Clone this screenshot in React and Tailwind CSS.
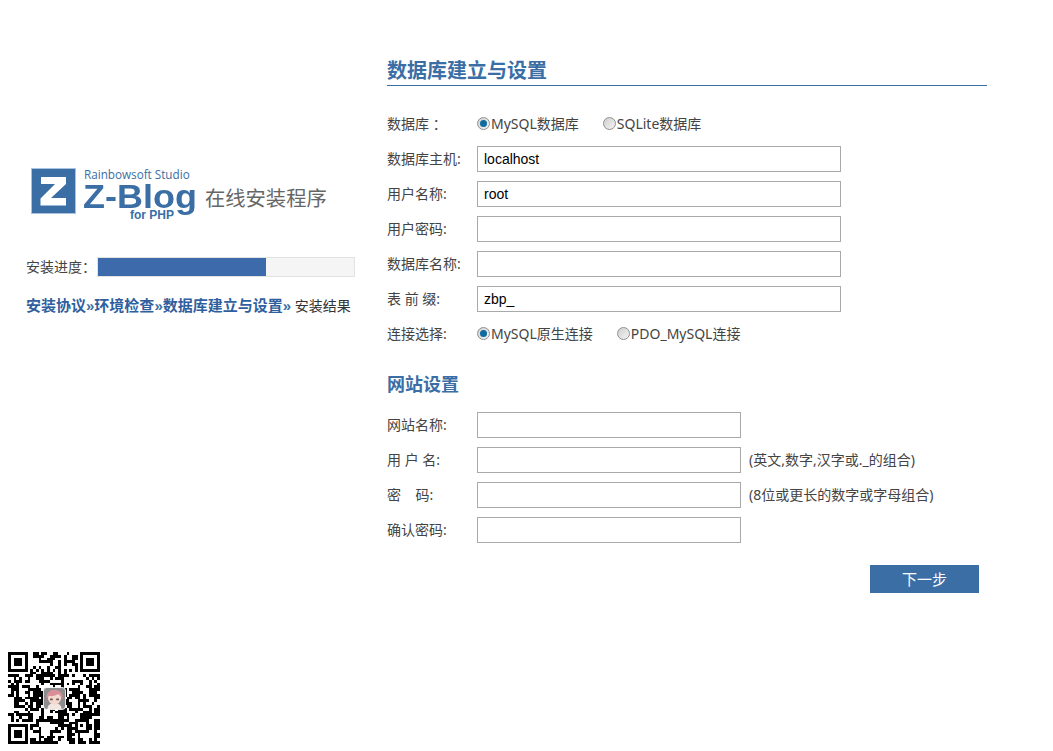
import React from 'react';

const BLUE = 'text-[#3a6ea5]';

// QR modules, seeded so it stays the same between runs
const QR_SIZE = 33;
const qrCells = () => {
  const cells = [];
  let seed = 7331;
  const next = () => {
    seed = (seed * 1103515245 + 12345) & 0x7fffffff;
    return ((seed >> 16) & 255) / 255;
  };
  const inFinder = (x, y) =>
    (x < 8 && y < 8) || (x >= QR_SIZE - 8 && y < 8) || (x < 8 && y >= QR_SIZE - 8);
  const inAlign = (x, y) => x >= 24 && x <= 28 && y >= 24 && y <= 28;
  const on = {};
  for (let y = 0; y < QR_SIZE; y++) {
    for (let x = 0; x < QR_SIZE; x++) {
      if (inFinder(x, y) || inAlign(x, y)) continue;
      // runs of the same colour, the code in the picture is blocky
      const left = on[`${x - 1}-${y}`];
      const up = on[`${x}-${y - 1}`];
      let p = 0.36;
      if (left) p += 0.16;
      if (up) p += 0.16;
      let v = next() < p;
      if (y === 6) v = x % 2 === 0;
      if (x === 6) v = y % 2 === 0;
      on[`${x}-${y}`] = v;
      if (v) cells.push([x, y]);
    }
  }
  return cells;
};

const Finder = ({ x, y }) => (
  <g>
    <path d={`M${x} ${y}h7v7h-7z M${x + 1} ${y + 1}v5h5v-5z`} fillRule="evenodd" fill="#000" />
    <rect x={x + 2} y={y + 2} width="3" height="3" fill="#000" />
  </g>
);

const QrCode = () => (
  <div className="relative w-[92px] h-[92px]">
    <svg className="blur-[0.35px]" width="92" height="92" viewBox="0 0 33 33" shapeRendering="crispEdges">
      {qrCells().map(([x, y]) => (
        <rect key={`${x}-${y}`} x={x} y={y} width="1" height="1" fill="#000" />
      ))}
      <Finder x={0} y={0} />
      <Finder x={26} y={0} />
      <Finder x={0} y={26} />
      <path d="M24 24h5v5h-5z M25 25v3h3v-3z" fillRule="evenodd" fill="#000" />
      <rect x="26" y="26" width="1" height="1" fill="#000" />
    </svg>
    {/* avatar in the middle of the code */}
    <svg className="absolute left-[35px] top-[35px]" width="23" height="23" viewBox="0 0 26 26">
      <rect x="0.5" y="0.5" width="25" height="25" rx="4" fill="#8d8d8d" stroke="#fff" />
      <path d="M5 25c0-5 4-7 8-7s8 2 8 7z" fill="#f1e6e2" />
      <ellipse cx="13" cy="12" rx="7.5" ry="8" fill="#f4d9cf" />
      <path d="M4 14C3 6 8 3 13 3s10 3 9 11c-2-3-3-5-5-6-3 2-7 3-10 2-1 1-2 2-3 4z" fill="#d98f98" />
      <path d="M8 13h3v2H8zM15 13h3v2h-3z" fill="#6a5550" />
    </svg>
  </div>
);

const Logo = () => (
  <div className="flex items-start h-[55px] ml-[5px]">
    <svg width="45" height="46" viewBox="0 0 45 46" className="mt-[1px]">
      <rect x="0.5" y="0.5" width="44" height="45" fill="#3a6ea5" stroke="#a9c4e0" />
      <path d="M10 9h25v7L20 30h15v7.5H9.5v-7L24 16H10z" fill="#fff" />
    </svg>
    <div className="relative w-[120px] h-[55px] ml-[7px] font-['Liberation_Sans',sans-serif] text-[#3a6ea5]">
      <div className="absolute left-[1px] top-0 text-[11.7px] leading-[14px] whitespace-nowrap font-['Open_Sans',sans-serif]">
        Rainbowsoft Studio
      </div>
      <div className="absolute left-0 top-[18px] text-[33px] leading-[24px] font-bold whitespace-nowrap origin-left scale-x-[1.09]">
        Z-Blog
      </div>
      <div className="absolute left-[47px] top-[42px] text-[12px] leading-[12px] font-bold whitespace-nowrap">
        for PHP
      </div>
    </div>
    <div className="ml-[2px] mt-[18px] text-[20.3px] leading-[27px] text-[#666] whitespace-nowrap">
      在线安装程序
    </div>
  </div>
);

const Radio = ({ checked, label }) => (
  <label className="flex items-center text-[14px] text-[#444] pb-[2px]">
    <span className="w-[13px] h-[13px] rounded-full border border-[#8f8f8f] flex items-center justify-center bg-gradient-to-br from-[#d0d0d0] to-[#f4f4f4]">
      {checked && <span className="w-[7px] h-[7px] rounded-full bg-[#0f6a9f]" />}
    </span>
    <span className="ml-px">{label}</span>
  </label>
);

const Row = ({ label, children }) => (
  <div className="flex items-center h-[26px] mb-[9px]">
    <div className="w-[90px] text-[14px] text-[#444] whitespace-pre pb-[2px]">{label}</div>
    {children}
  </div>
);

const Field = ({ value = '', wide }) => (
  <input
    readOnly
    value={value}
    className={`${wide ? 'w-[364px]' : 'w-[264px]'} h-[26px] border border-[#a9a9a9] bg-white px-[6px] text-[14px] text-[#000] font-['Liberation_Sans',sans-serif] outline-none`}
  />
);

const Sep = () => <b className="text-[#3a6ea5] font-['Liberation_Sans',sans-serif]">»</b>;

export default function App() {
  return (
    <div className="w-[1053px] h-[751px] bg-white overflow-hidden font-['Noto_Sans','Noto_Sans_CJK_SC',sans-serif] flex flex-col">
      <div className="flex h-[652px]">
        {/* Left column */}
        <div className="w-[387px] pl-[26px] pt-[167px] shrink-0">
          <Logo />
          <div className="flex items-center h-[20px] mt-[35px]">
            <span className="w-[71px] text-[14px] text-[#444] whitespace-nowrap pb-[2px]">安装进度：</span>
            <div className="w-[258px] h-[20px] border border-[#e2e2e2] bg-[#f5f5f5]">
              <div className="w-[168px] h-full bg-[#3d6aaa]" />
            </div>
          </div>
          <div className="mt-[17px] text-[15px] leading-[22px] whitespace-nowrap text-[#333]">
            <b className="text-[#2f5f9e]">安装协议</b>
            <Sep />
            <b className="text-[#2f5f9e]">环境检查</b>
            <Sep />
            <b className="text-[#2f5f9e]">数据库建立与设置</b>
            <Sep />
            <span className="text-[14px]"> 安装结果</span>
          </div>
        </div>

        {/* Right column */}
        <div className="w-[600px] pt-[56px]">
          <h2 className={`text-[20px] leading-[29px] font-bold ${BLUE} border-b border-[#3a6ea5] h-[30px]`}>
            数据库建立与设置
          </h2>
          <div className="mt-[25px]">
            <Row label="数据库 ：">
              <Radio checked label="MySQL数据库" />
              <div className="w-[24px]" />
              <Radio label="SQLite数据库" />
            </Row>
            <Row label="数据库主机:"><Field wide value="localhost" /></Row>
            <Row label="用户名称:"><Field wide value="root" /></Row>
            <Row label="用户密码:"><Field wide /></Row>
            <Row label="数据库名称:"><Field wide /></Row>
            <Row label="表 前 缀:"><Field wide value="zbp_" /></Row>
            <Row label="连接选择:">
              <Radio checked label="MySQL原生连接" />
              <div className="w-[24px]" />
              <Radio label="PDO_MySQL连接" />
            </Row>
          </div>
          <h3 className={`mt-[23px] text-[18px] leading-[28px] font-bold ${BLUE}`}>网站设置</h3>
          <div className="mt-[14px]">
            <Row label="网站名称:"><Field /></Row>
            <Row label="用 户 名:">
              <Field />
              <span className="ml-[8px] text-[14px] text-[#444] pb-[2px]">(英文,数字,汉字或._的组合)</span>
            </Row>
            <Row label="密    码:">
              <Field />
              <span className="ml-[8px] text-[14px] text-[#444] pb-[2px]">(8位或更长的数字或字母组合)</span>
            </Row>
            <Row label="确认密码:"><Field /></Row>
          </div>
          <div className="flex justify-end pr-[8px] mt-[22px]">
            <button className="w-[109px] h-[28px] bg-[#3a6ea5] text-white text-[15px]">下一步</button>
          </div>
        </div>
      </div>
      <div className="pl-[8px]">
        <QrCode />
      </div>
    </div>
  );
}
